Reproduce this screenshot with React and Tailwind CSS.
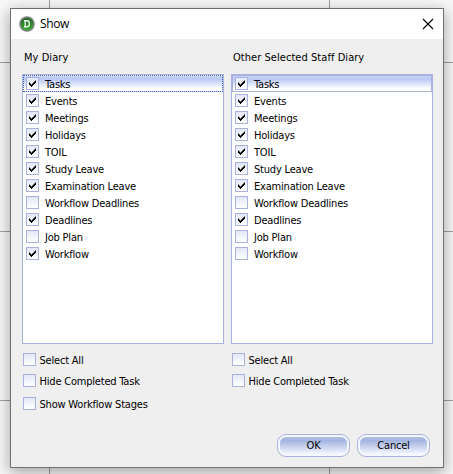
import { useState } from 'react'
import clsx from 'clsx'

const names = [
  'Tasks',
  'Events',
  'Meetings',
  'Holidays',
  'TOIL',
  'Study Leave',
  'Examination Leave',
  'Workflow Deadlines',
  'Deadlines',
  'Job Plan',
  'Workflow',
]

const makeItems = (unchecked) =>
  names.map((name) => ({ name, checked: !unchecked.includes(name) }))

function Box({ checked }) {
  return (
    <span className="block h-[13px] w-[13px] shrink-0 border border-[#a9b1dc] bg-linear-to-b from-[#e3e8f8] to-white">
      {checked && (
        <svg viewBox="0 0 11 11" className="block h-[11px] w-[11px]">
          <path
            d="M2 4.6h1v2.4h-1zM3 5.6h1v2.4h-1zM4 6.6h1v2.4h-1zM5 5.6h1v2.4h-1zM6 4.6h1v2.4h-1zM7 3.6h1v2.4h-1zM8 2.6h1v2.4h-1z"
            fill="#000"
          />
        </svg>
      )}
    </span>
  )
}

function Option({ label, className }) {
  const [checked, setChecked] = useState(false)
  return (
    <div
      className={clsx('flex h-[13px] items-center gap-[3.5px]', className)}
      onClick={() => setChecked(!checked)}
    >
      <Box checked={checked} />
      <span className="whitespace-nowrap pt-[2px] leading-[13px]">{label}</span>
    </div>
  )
}

function List({ initial, focused }) {
  const [items, setItems] = useState(initial)

  const toggle = (name) =>
    setItems(items.map((i) => (i.name === name ? { ...i, checked: !i.checked } : i)))

  return (
    <div className="h-[270px] w-[202px] border border-[#a9b1dc] bg-white">
      {items.map((item, index) => (
        <div
          key={item.name}
          onClick={() => toggle(item.name)}
          className={clsx(
            'flex h-[17px] items-center gap-[6px] border pl-[2px]',
            index > 0 && 'border-transparent',
            index === 0 && 'bg-linear-to-b from-[#c9d5f6] via-[#b9c8f2] via-20% to-white to-85%',
            index === 0 && (focused ? 'border-dotted border-[#3c61b8]' : 'border-[#a9b1dc]')
          )}
        >
          <Box checked={item.checked} />
          <span className="whitespace-nowrap pt-[2px] leading-[13px]">{item.name}</span>
        </div>
      ))}
    </div>
  )
}

function Button({ children }) {
  return (
    <button className="h-[23px] w-[73px] rounded-[9px] border border-[#a9b1dc] bg-[#f5f7ff] p-[2px]">
      <span className="flex h-full items-center justify-center rounded-[6px] bg-linear-to-b from-[#b3bfe2] via-[#a3b3df] via-20% to-[#f5f7ff] pt-[2px]">
        {children}
      </span>
    </button>
  )
}

export default function App() {
  return (
    <div className="relative h-[474px] w-[453px] overflow-hidden bg-[#f8f8f8] pl-[10px] pt-[8px] font-['DejaVu_Sans_Condensed','DejaVu_Sans',sans-serif] text-[11px] font-stretch-condensed tracking-[-0.2px] text-black">
      {/* calendar grid behind the dialog */}
      <div className="absolute left-[49px] top-0 h-full w-px bg-[#a0a0a0]" />
      <div className="absolute left-[329px] top-0 h-full w-px bg-[#a0a0a0]" />
      <div className="absolute left-0 top-[62px] h-px w-full bg-[#a0a0a0]" />
      <div className="absolute left-0 top-[231px] h-px w-full bg-[#a0a0a0]" />
      <div className="absolute left-0 top-[400px] h-px w-full bg-[#a0a0a0]" />

      <div className="relative h-[460px] w-[434px] border border-[#707070] bg-[#efefef] shadow-[0_4px_14px_1px_rgba(0,0,0,0.32)]">
        <div className="flex h-[30px] items-center bg-white pl-[8px] pr-[9px]">
          <svg viewBox="0 0 16 16" className="h-4 w-4">
            <defs>
              <linearGradient id="ball" x1="0" y1="0" x2="0" y2="1">
                <stop offset="0" stopColor="#23652a" />
                <stop offset="1" stopColor="#37ad2f" />
              </linearGradient>
            </defs>
            <circle cx="8" cy="8" r="7.8" fill="#7a837d" />
            <circle cx="8" cy="8" r="6.2" fill="url(#ball)" />
            <path
              d="M5 4.8H8.4Q10.4 5 10.4 7.8Q10.4 10.6 8.4 10.8H5M6.2 4.8V10.7"
              fill="none"
              stroke="#e6f3e5"
              strokeWidth="1.4"
            />
          </svg>
          <span className="ml-[5px] font-['Open_Sans',sans-serif] text-[12px] leading-4 font-stretch-normal tracking-[-0.35px]">
            Show
          </span>
          <svg viewBox="0 0 12 12" className="ml-auto h-3 w-3">
            <path d="M1 1L11 11M11 1L1 11" stroke="#000" strokeWidth="1.1" />
          </svg>
        </div>

        <div className="flex gap-[7px] pl-[11px] pt-[10px]">
          <div className="w-[202px]">
            <div className="mb-[8px] h-[17px] pl-[2px] leading-[17px] tracking-[0.05px]">My Diary</div>
            <List initial={makeItems(['Workflow Deadlines', 'Job Plan'])} focused />
            <div className="pl-px pt-[9px]">
              <Option label="Select All" />
              <Option label="Hide Completed Task" className="mt-[8px]" />
              <Option label="Show Workflow Stages" className="mt-[10px]" />
            </div>
          </div>
          <div className="w-[202px]">
            <div className="mb-[8px] h-[17px] whitespace-nowrap pl-[2px] leading-[17px] tracking-[0.05px]">
              Other Selected Staff Diary
            </div>
            <List initial={makeItems(['Workflow Deadlines', 'Job Plan', 'Workflow'])} />
            <div className="pl-px pt-[9px]">
              <Option label="Select All" />
              <Option label="Hide Completed Task" className="mt-[8px]" />
            </div>
          </div>
        </div>

        <div className="mt-[24px] flex justify-end gap-[7px] pr-[13px]">
          <Button>OK</Button>
          <Button>Cancel</Button>
        </div>
      </div>
    </div>
  )
}
